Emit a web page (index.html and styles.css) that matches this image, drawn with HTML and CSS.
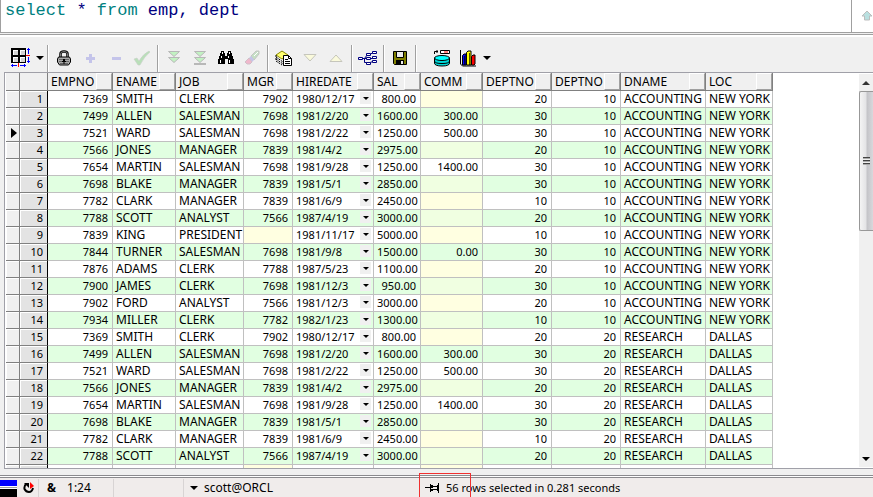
FILE: index.html
```html
<!DOCTYPE html>
<html lang="en">
    <head>
        <meta charset="utf-8" />
        <title>SQL Window</title>
        <link rel="stylesheet" href="styles.css">
    </head>
    <body>
        <div class="editor">
            <pre class="sql"><code><span class="kw">select</span> * <span class="kw">from</span> emp, dept</code></pre>
            <div class="editor-side">
                <button class="side-btn" aria-label="Previous statement">
                    <svg width="12" height="11" viewBox="0 0 12 11"><path d="M6 1 11 6H8.5V10H3.5V6H1Z" fill="#b9e0e0" stroke="#bdbdbd"/></svg>
                </button>
            </div>
        </div>

        <div class="toolbar">
            <button class="tool" aria-label="Grid options">
                <svg width="22" height="22" viewBox="0 0 22 22" shape-rendering="crispEdges">
                    <path d="M2 2h15v15H2z" fill="#fff"/>
                    <path d="M4 4h4v4H4zM11 4h4v4h-4zM4 11h4v4H4zM11 11h4v4h-4z" fill="#d4d4d4"/>
                    <path d="M1 1h15v2H1zM1 8h15v2H1zM1 15h15v1H1zM1 1h2v15H1zM8 1h2v15H8zM15 1h1v15h-1z" fill="#000"/>
                    <path d="M16 8h4v1h-4zM8 16h1v4H8z" fill="#f00"/>
                    <path d="M18 1h1v6h-1zM17 2h3v1h-3zM18 10h1v6h-1zM17 14h3v1h-3zM1 18h6v1H1zM2 17h1v3H2zM10 18h6v1h-6zM14 17h1v3h-1z" fill="#00f"/>
                </svg>
            </button>
            <button class="tool drop" aria-label="Grid options menu"><i class="caret"></i></button>
            <span class="sep"></span>
            <button class="tool" aria-label="Lock">
                <svg width="16" height="16" viewBox="0 0 16 16">
                    <path d="M4.5 7V4Q4.5 1.5 8 1.5T11.5 4V7" fill="none" stroke="#000" stroke-width="2.500"/>
                    <path d="M4.5 7V4Q4.5 1.5 8 1.5T11.5 4V7" fill="none" stroke="#999" stroke-width=".8"/>
                    <path d="M2.5 7h11l1 2v3l-2 3h-9l-2-3V9z" fill="#aaa" stroke="#000"/>
                    <path d="M3 9.5h10M3 11.5h10M4 13.5h8" stroke="#666"/>
                    <path d="M7 9h2v2h1v1H8.5v2h-1v-2H6v-1h1z" fill="#000"/>
                </svg>
            </button>
            <button class="tool" aria-label="Insert record" disabled>
                <svg width="16" height="16" viewBox="0 0 16 16" shape-rendering="crispEdges"><path d="M7 4h3v3h3v3h-3v3H7v-3H4V7h3z" fill="#c4c4ea"/></svg>
            </button>
            <button class="tool" aria-label="Delete record" disabled>
                <svg width="16" height="16" viewBox="0 0 16 16" shape-rendering="crispEdges"><path d="M4 7h9v3H4z" fill="#c4c4ea"/></svg>
            </button>
            <button class="tool" aria-label="Post changes" disabled>
                <svg width="18" height="16" viewBox="0 0 18 16"><path d="M1 9 4 8 6 11Q10 4 16 1L17 2Q11 7 7 15H5Z" fill="#b9dfb9" stroke="#c8cfc8" stroke-width=".6"/></svg>
            </button>
            <span class="sep"></span>
            <button class="tool" aria-label="Fetch next page" disabled>
                <svg width="16" height="16" viewBox="0 0 16 16"><path d="M2.5 1.5h11L8 6.5zM2.5 7.5h11L8 12.5z" fill="#c2f2c2" stroke="#b8b8b8"/></svg>
            </button>
            <button class="tool" aria-label="Fetch last page" disabled>
                <svg width="16" height="16" viewBox="0 0 16 16"><path d="M2.5 1.5h11L8 6.5zM2.5 7.5h11L8 12.5z" fill="#c2f2c2" stroke="#b8b8b8"/><path d="M2 14h12" stroke="#b8b8b8" stroke-width="2"/></svg>
            </button>
            <button class="tool" aria-label="Find">
                <svg width="16" height="16" viewBox="0 0 16 16" shape-rendering="crispEdges">
                    <path d="M3 1h3v2h1v3h2V3h1V1h3v2h1v3h1v3h1v5h-6V9H7v5H0V9h1V6h1V3h1z" fill="#000"/>
                    <path d="M4 2h1v2H4zM11 2h1v2h-1zM3 6h1v2H3zM10 6h1v2h-1zM2 10h1v3H2zM11 10h1v3h-1z" fill="#fff"/>
                </svg>
            </button>
            <button class="tool" aria-label="Clear" disabled>
                <svg width="16" height="16" viewBox="0 0 16 16">
                    <path d="M7 6 12 1 15 1 15 4 10 10Z" fill="#c5dfc5" stroke="#c4c4c4"/>
                    <path d="M5 8 7 6 10 10 8 12Z" fill="#c4c4ea"/>
                    <path d="M5 8 8 12 6 14H3L1 12Z" fill="#f0b8cc" stroke="#d0c0c8"/>
                    <path d="M10 6 14 2" stroke="#fff"/>
                </svg>
            </button>
            <span class="sep"></span>
            <button class="tool" aria-label="Query by example">
                <svg width="18" height="16" viewBox="0 0 18 16">
                    <path d="M1 5 7 1 13 5 7 9Z" fill="#ffff70" stroke="#8a8a00"/>
                    <path d="M1 7 8 12M1 9 8 14M1 11 7 15M1 5v6" fill="none" stroke="#000" stroke-dasharray="2 1"/>
                    <path d="M8.5 5.5h5l3 3v7h-8z" fill="#fff" stroke="#000"/>
                    <path d="M13.5 5.5v3h3M10 9.5h3M10 11.5h5M10 13.5h5" fill="none" stroke="#000"/>
                </svg>
            </button>
            <button class="tool" aria-label="Next record" disabled>
                <svg width="16" height="16" viewBox="0 0 16 16"><path d="M2 4.5h12L8 11z" fill="#fafadc" stroke="#c6c6bc"/></svg>
            </button>
            <button class="tool" aria-label="Previous record" disabled>
                <svg width="16" height="16" viewBox="0 0 16 16"><path d="M2 11.5h12L8 5z" fill="#fafadc" stroke="#c6c6bc"/></svg>
            </button>
            <span class="sep"></span>
            <button class="tool" aria-label="Linked query">
                <svg width="20" height="16" viewBox="0 0 20 16">
                    <path d="M4 8.5h11M6.5 8.5v4h3M6.5 8.5l3-4M12 4.5l3-2M12 12.5l3-1" fill="none" stroke="#000080"/>
                    <path d="M.5 7.5h4v2h-4zM8.5 3.5h4v2h-4zM8.5 7.5h4v2h-4zM8.5 12.5h4v2h-4zM14.5 1.500h4v2h-4zM14.5 6.5h4v2h-4zM14.5 10.5h4v2h-4z" fill="#fff" stroke="#000080"/>
                </svg>
            </button>
            <span class="sep"></span>
            <button class="tool" aria-label="Export results">
                <svg width="16" height="16" viewBox="0 0 16 16">
                    <path d="M1.5 1.5h13v13h-12l-1-1z" fill="#808000" stroke="#000"/>
                    <path d="M4.5 1.5h7v6h-7z" fill="#eee" stroke="#000"/>
                    <path d="M4 10h8v5H4z" fill="#000"/>
                    <path d="M9 11h2v3H9z" fill="#eee"/>
                </svg>
            </button>
            <span class="sep"></span>
            <span class="gap"></span>
            <button class="tool" aria-label="Export to table">
                <svg width="18" height="18" viewBox="0 0 18 18">
                    <path d="M1.5 5V2.5H5M4 1v3" fill="none" stroke="#000"/>
                    <path d="M7.5 1.5h9v3h-9z" fill="#fff" stroke="#000"/><path d="M11 3h4" stroke="#f00"/>
                    <path d="M1.5 9v5q0 3 7.5 3t7.5-3V9z" fill="#00d8d8" stroke="#000"/>
                    <ellipse cx="9" cy="9" rx="7.5" ry="2.5" fill="#00ffff" stroke="#000"/>
                    <path d="M2 12.5q0 2 7 2t7-2" fill="none" stroke="#000"/>
                </svg>
            </button>
            <button class="tool" aria-label="Chart">
                <svg width="18" height="18" viewBox="0 0 18 18">
                    <path d="M1.5 1v14l2 2H17" fill="none" stroke="#000"/>
                    <path d="M3.5 6.5 5 5h2v11H3.5z" fill="#00f" stroke="#000"/>
                    <path d="M7.5 3.5 9 2h3v14H7.5z" fill="#ff0" stroke="#000"/>
                    <path d="M12.5 7.5 14 6h2v9l-1 1h-2.5z" fill="#f00" stroke="#000"/>
                    <path d="M5.5 7v9M10.5 4v12" stroke="#000" stroke-width=".7"/>
                </svg>
            </button>
            <button class="tool drop" aria-label="Chart menu"><i class="caret"></i></button>
        </div>

        <div class="results">
            <div class="grid-wrap">
                <table class="grid">
                    <colgroup>
                        <col class="c-mark"><col class="c-num"><col class="c-empno"><col class="c-ename"><col class="c-job"><col class="c-mgr"><col class="c-hire"><col class="c-sal"><col class="c-comm"><col class="c-dept"><col class="c-dept"><col class="c-dname"><col class="c-loc">
                    </colgroup>
                    <thead>
                        <tr>
                            <th></th>
                            <th></th>
                            <th class="sort">EMPNO</th>
                            <th class="sort">ENAME</th>
                            <th class="sort">JOB</th>
                            <th class="sort">MGR</th>
                            <th class="sort">HIREDATE</th>
                            <th class="sort">SAL</th>
                            <th class="sort">COMM</th>
                            <th class="sort">DEPTNO</th>
                            <th class="sort">DEPTNO</th>
                            <th class="sort">DNAME</th>
                            <th class="sort">LOC</th>
                        </tr>
                    </thead>
                    <tbody id="rows"></tbody>
                </table>
            </div>
            <div class="scroll">
                <button class="scroll-btn" aria-label="Scroll up"><i class="caret up"></i></button>
                <div class="thumb"><i class="grip"></i></div>
                <button class="scroll-btn last" aria-label="Scroll down"><i class="caret"></i></button>
            </div>
        </div>

        <div class="status">
            <div class="flag"></div>
            <div class="pane refresh">
                <svg width="12" height="12" viewBox="0 0 12 12"><path d="M3 2Q1 4 1.5 7 3 10 6 10T10 6" fill="none" stroke="#000" stroke-width="2"/><path d="M1 1h5v5z" fill="#000"/><path d="M7 0 11 4 7 7z" fill="#f00"/></svg>
            </div>
            <div class="pane position"><b>&amp;</b><span>1:24</span></div>
            <div class="pane blank"></div>
            <button class="pane session"><i class="caret"></i>scott@ORCL</button>
            <div class="pane message">
                <svg width="15" height="12" viewBox="0 0 15 12" shape-rendering="crispEdges"><path d="M0 5h5v1H0zM5 2h1v8H5zM6 3h2v1h4V3h1V1h1v10h-1V9h-1V8H8v1H6V7h6V5H8v1H6z" fill="#000"/></svg>
                <span class="rowcount">56 rows selected in 0.281 seconds</span>
                <span class="highlight"></span>
            </div>
        </div>

        <script>
            var emps = [
                [7369, 'SMITH', 'CLERK', 7902, '1980/12/17', '800.00', '', 20],
                [7499, 'ALLEN', 'SALESMAN', 7698, '1981/2/20', '1600.00', '300.00', 30],
                [7521, 'WARD', 'SALESMAN', 7698, '1981/2/22', '1250.00', '500.00', 30],
                [7566, 'JONES', 'MANAGER', 7839, '1981/4/2', '2975.00', '', 20],
                [7654, 'MARTIN', 'SALESMAN', 7698, '1981/9/28', '1250.00', '1400.00', 30],
                [7698, 'BLAKE', 'MANAGER', 7839, '1981/5/1', '2850.00', '', 30],
                [7782, 'CLARK', 'MANAGER', 7839, '1981/6/9', '2450.00', '', 10],
                [7788, 'SCOTT', 'ANALYST', 7566, '1987/4/19', '3000.00', '', 20],
                [7839, 'KING', 'PRESIDENT', '', '1981/11/17', '5000.00', '', 10],
                [7844, 'TURNER', 'SALESMAN', 7698, '1981/9/8', '1500.00', '0.00', 30],
                [7876, 'ADAMS', 'CLERK', 7788, '1987/5/23', '1100.00', '', 20],
                [7900, 'JAMES', 'CLERK', 7698, '1981/12/3', '950.00', '', 30],
                [7902, 'FORD', 'ANALYST', 7566, '1981/12/3', '3000.00', '', 20],
                [7934, 'MILLER', 'CLERK', 7782, '1982/1/23', '1300.00', '', 10]
            ];
            var depts = [
                [10, 'ACCOUNTING', 'NEW YORK'],
                [20, 'RESEARCH', 'DALLAS']
            ];
            var numeric = [0, 3, 5, 6, 7, 8];
            var visible = 22;
            var current = 3;

            var body = document.getElementById('rows');
            for (var i = 0; i < visible; i++) {
                var tr = body.insertRow();
                var marker = tr.insertCell();
                marker.className = 'mark';
                if (i + 1 === current) {
                    marker.innerHTML = '<i class="pointer"></i>';
                }
                var num = tr.insertCell();
                num.className = 'num';
                num.textContent = i + 1;

                var data = emps[i % emps.length].concat(depts[Math.floor(i / emps.length)]);
                data.forEach(function(value, col) {
                    var td = tr.insertCell();
                    td.textContent = value;
                    if (numeric.indexOf(col) !== -1) td.classList.add('right');
                    if (value === '') td.classList.add('null');
                    if (col === 4) {
                        td.classList.add('date');
                        td.insertAdjacentHTML('beforeend', '<button class="pick" aria-label="Pick date"><i class="caret small"></i></button>');
                    }
                });
            }

            // top edge of the next row
            var next = body.insertRow();
            for (var c = 0; c < 13; c++) {
                next.insertCell().className = ['mark', 'num'][c] || (c === 5 || c === 8 ? 'null' : '');
            }
        </script>
    </body>
</html>
```
FILE: styles.css
```css
* {
    box-sizing: border-box;
}
html,
body {
    height: 100%;
}
body {
    margin: 0;
    display: flex;
    flex-direction: column;
    overflow: hidden;
    font: 12px/16px "Noto Sans", "Open Sans", sans-serif;
    color: #000;
    background: #f0f0f0;
}
button {
    padding: 0;
    border: 0;
    background: none;
    font: inherit;
    color: inherit;
}
svg {
    display: block;
}

/* editor */
.editor {
    display: flex;
    flex: none;
    height: 37px;
    background: #fff;
    border-bottom: 2px solid #fff;
    box-shadow: inset 0 -1px #a0a0a0, inset 0 -2px #f0f0f0, inset 0 -3px #a0a0a0;
}
.sql {
    flex: 1;
    margin: 0 0 3px;
    padding: 1px 4px;
    border-left: 1px solid #a0a0a0;
    border-right: 1px solid #a0a0a0;
    font: 17px/20px "Liberation Mono", "Courier New", monospace;
    color: #000080;
}
.sql code {
    font: inherit;
}
.kw {
    color: #008080;
}
.editor-side {
    width: 21px;
    padding: 9px 0 0 9px;
}

/* toolbar */
.toolbar {
    display: flex;
    flex: none;
    height: 35px;
    padding: 8px 0 0 8px;
}
.tool {
    display: flex;
    align-items: center;
    justify-content: center;
    width: 26px;
    height: 26px;
}
.tool.drop {
    width: 11px;
}
.sep {
    width: 2px;
    margin: 0 2px;
    border-left: 1px solid #a0a0a0;
    border-right: 1px solid #fff;
}
.gap {
    width: 10px;
}
.caret {
    border: 4px solid transparent;
    border-top-color: #000;
    border-bottom-width: 0;
}
.caret.small {
    border-width: 3px;
    border-bottom-width: 0;
}
.caret.up {
    border-top-width: 0;
    border-bottom: 4px solid #333;
}

/* result grid */
.results {
    display: flex;
    flex: 1;
    min-height: 0;
    margin-left: 4px;
    background: #fff;
    border: 1px solid #a0a0a8;
    border-right: 0;
}
.grid-wrap {
    flex: 1;
    overflow: hidden;
    padding-left: 1px;
}
.grid {
    width: 767px;
    table-layout: fixed;
    border-collapse: separate;
    border-spacing: 0;
}
.c-mark { width: 14px; }
.c-num { width: 28px; }
.c-empno { width: 65px; }
.c-ename { width: 63px; }
.c-job { width: 68px; }
.c-mgr { width: 49px; }
.c-hire { width: 81px; }
.c-sal { width: 47px; }
.c-comm { width: 62px; }
.c-dept { width: 69px; }
.c-dname { width: 85px; }
.c-loc { width: 67px; }
.grid th,
.grid td {
    height: 17px;
    padding: 0 4px 0 3px;
    line-height: 16px;
    white-space: nowrap;
    text-align: left;
    font-weight: normal;
    border-right: 1px solid #c0c0c0;
    border-bottom: 1px solid #c0c0c0;
}
.grid th {
    height: 18px;
    line-height: 17px;
    background: #f0f0f0;
    border-color: #808080;
}
.grid th.sort::after {
    content: "";
    float: right;
    width: 14px;
    height: 15px;
    margin-right: -4px;
    border: 1px solid #fff;
    border-right: 1px solid #a0a0a0;
    border-bottom-color: #a0a0a0;
}
.grid tbody tr:nth-child(even) td {
    background: #e1ffe1;
}
.grid tbody tr td.null {
    background: #ffffe1;
}
.grid tbody tr:nth-child(even) td.null {
    background: #f0ffe1;
}
.grid td.right,
.grid td.date,
.grid td.num {
    font-size: 11px;
}
.grid td.right {
    text-align: right;
}
.grid tbody tr td.mark,
.grid tbody tr td.num {
    background: #f0f0f0;
    border-color: #808080;
    box-shadow: inset 1px 1px #fff;
}
.grid tbody tr td.num {
    background: #e3e3e3;
    border-right-color: #000;
    text-align: right;
}
.pointer {
    display: block;
    width: 6px;
    margin-left: 2px;
    border: 5px solid transparent;
    border-left: 6px solid #000;
    border-right: 0;
}
.pick {
    float: right;
    display: flex;
    align-items: center;
    justify-content: center;
    width: 11px;
    height: 12px;
    margin: 1px -2px 0 0;
    background: #f0f0f0;
}

/* scroll bar */
.scroll {
    display: flex;
    flex-direction: column;
    width: 14px;
    margin: 1px 0;
    background: #f0f0f0;
}
.scroll-btn {
    display: flex;
    align-items: center;
    justify-content: center;
    height: 17px;
}
.scroll-btn.last {
    margin-top: auto;
}
.thumb {
    display: flex;
    align-items: center;
    justify-content: center;
    height: 140px;
    border: 1px solid #989898;
    border-right: 0;
    border-radius: 2px 0 0 2px;
    background: linear-gradient(to right, #f4f4f4, #e4e4e6 45%, #c4c4c8 55%, #d8d8dc);
}
.grip {
    width: 7px;
    height: 8px;
    background: repeating-linear-gradient(#444 0 1px, #aaa 1px 2px, #eee 2px 3px);
}

/* status bar */
.status {
    display: flex;
    flex: none;
    height: 28px;
    padding-top: 10px;
    background: linear-gradient(#f0f0f0 6px, #8a8a8e 6px 7px, #fff 7px 8px, #8a8a8e 8px 9px, #f0eceb 9px);
}
.flag {
    width: 17px;
    margin-top: 1px;
    background: linear-gradient(#00f 6px, #fff 6px 7px, #a0a0a0 7px 8px, #fff 8px 9px, #000 9px);
}
.pane {
    display: flex;
    align-items: center;
    border-right: 1px solid #d8d4d4;
}
.refresh {
    width: 22px;
    padding-left: 6px;
}
.position {
    width: 75px;
    padding-left: 8px;
    gap: 11px;
}
.blank {
    width: 70px;
}
.session {
    width: 236px;
    padding-left: 6px;
    gap: 6px;
    border-right: 0;
}
.message {
    position: relative;
    flex: 1;
    padding-left: 5px;
    gap: 6px;
    border-right: 0;
    font-size: 11px;
}
/* marker box over the row count */
.highlight {
    position: absolute;
    top: -6px;
    left: -1px;
    width: 52px;
    height: 26px;
    border: 1px solid #f03030;
    border-bottom: 0;
}
```
